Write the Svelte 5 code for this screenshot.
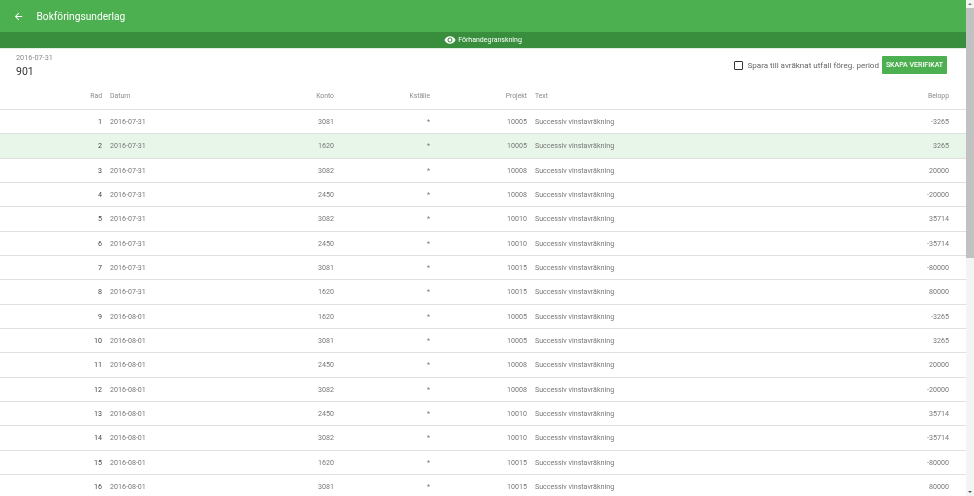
<script>
  const rows = [
    [1, "2016-07-31", 3081, 10005, -3265],
    [2, "2016-07-31", 1620, 10005, 3265],
    [3, "2016-07-31", 3082, 10008, 20000],
    [4, "2016-07-31", 2450, 10008, -20000],
    [5, "2016-07-31", 3082, 10010, 35714],
    [6, "2016-07-31", 2450, 10010, -35714],
    [7, "2016-07-31", 3081, 10015, -80000],
    [8, "2016-07-31", 1620, 10015, 80000],
    [9, "2016-08-01", 1620, 10005, -3265],
    [10, "2016-08-01", 3081, 10005, 3265],
    [11, "2016-08-01", 2450, 10008, 20000],
    [12, "2016-08-01", 3082, 10008, -20000],
    [13, "2016-08-01", 2450, 10010, 35714],
    [14, "2016-08-01", 3082, 10010, -35714],
    [15, "2016-08-01", 1620, 10015, -80000],
    [16, "2016-08-01", 3081, 10015, 80000]
  ];
  const hovered = 2;
</script>

<div class="page">
  <div class="content">
    <header class="appbar">
      <svg class="back" viewBox="0 0 24 24">
        <path fill="currentColor" d="M20 11H7.83l5.59-5.59L12 4l-8 8 8 8 1.41-1.41L7.83 13H20v-2z" />
      </svg>
      <h1>Bokföringsunderlag</h1>
    </header>
    <div class="preview">
      <svg class="eye" viewBox="0 0 24 24">
        <path fill="currentColor" d="M12 4.5C7 4.5 2.73 7.61 1 12c1.73 4.39 6 7.5 11 7.5s9.27-3.11 11-7.5c-1.73-4.39-6-7.5-11-7.5zM12 17c-2.76 0-5-2.24-5-5s2.24-5 5-5 5 2.24 5 5-2.24 5-5 5zm0-8c-1.66 0-3 1.34-3 3s1.34 3 3 3 3-1.34 3-3-1.34-3-3-3z" />
      </svg>
      <span>Förhandegranskning</span>
    </div>
    <div class="summary">
      <div class="title">
        <div class="date">2016-07-31</div>
        <div class="number">901</div>
      </div>
      <div class="actions">
        <label class="check">
          <span class="box"></span>
          <span>Spara till avräknat utfall föreg. period</span>
        </label>
        <button>SKAPA VERIFIKAT</button>
      </div>
    </div>
    <table>
      <colgroup>
        <col class="c-rad" />
        <col class="c-datum" />
        <col class="c-konto" />
        <col class="c-kst" />
        <col class="c-proj" />
        <col />
        <col class="c-belopp" />
      </colgroup>
      <thead>
        <tr>
          <th class="num">Rad</th>
          <th>Datum</th>
          <th class="num">Konto</th>
          <th class="num">Kställe</th>
          <th class="num">Projekt</th>
          <th>Text</th>
          <th class="num last">Belopp</th>
        </tr>
      </thead>
      <tbody>
        {#each rows as r}
          <tr class:hovered={r[0] === hovered}>
            <td class="num rad">{r[0]}</td>
            <td>{r[1]}</td>
            <td class="num">{r[2]}</td>
            <td class="num">*</td>
            <td class="num">{r[3]}</td>
            <td>Successiv vinstavräkning</td>
            <td class="num last">{r[4]}</td>
          </tr>
        {/each}
      </tbody>
    </table>
  </div>
  <div class="scrollbar">
    <span class="arrow up"></span>
    <span class="thumb"></span>
    <span class="arrow down"></span>
  </div>
</div>

<style>
  :global(body) {
    margin: 0;
    overflow: hidden;
    background: #fff;
  }

  .page {
    display: flex;
    height: 496px;
    overflow: hidden;
    font-family: Roboto, "Liberation Sans", sans-serif;
    will-change: transform;
  }

  .content {
    flex: 1;
    min-width: 0;
    overflow: hidden;
  }

  .appbar {
    display: flex;
    align-items: center;
    height: 32px;
    padding-left: 13px;
    background: #4caf50;
    color: #fff;
  }

  .back {
    width: 11px;
    height: 11px;
    margin-right: 12.5px;
  }

  h1 {
    margin: 0;
    font-size: 10.2px;
    font-weight: 400;
  }

  .preview {
    display: flex;
    align-items: center;
    justify-content: center;
    gap: 2px;
    height: 16px;
    background: #388e3c;
    color: #fff;
    font-size: 7px;
  }

  .eye {
    width: 12px;
    height: 12px;
  }

  .summary {
    display: flex;
    justify-content: space-between;
    align-items: flex-start;
    height: 34px;
    padding: 4px 19px 0 16px;
    box-sizing: border-box;
    border-top: 1px solid #e4efe4;
  }

  .date {
    font-size: 7.3px;
    color: #8a8a8a;
    line-height: 10px;
  }

  .number {
    margin-top: 2px;
    font-size: 10.5px;
    line-height: 13px;
    color: #333;
  }

  .actions {
    display: flex;
    align-items: center;
    gap: 3px;
    margin-top: 3px;
  }

  .check {
    display: flex;
    align-items: center;
    gap: 5px;
    font-size: 8.05px;
    color: #666;
  }

  .box {
    width: 7px;
    height: 7px;
    border: 1.3px solid #333;
    border-radius: 1px;
  }

  button {
    width: 65px;
    height: 18px;
    padding: 0;
    border: 0;
    border-radius: 1px;
    background: #4caf50;
    color: #fff;
    font: 500 7px Roboto, sans-serif;
  }

  table {
    width: 100%;
    table-layout: fixed;
    border-collapse: collapse;
    font-size: 7.1px;
    color: #777;
  }

  .c-rad { width: 106px; }
  .c-datum { width: 135.5px; }
  .c-konto { width: 96.5px; }
  .c-kst { width: 96px; }
  .c-proj { width: 97px; }
  .c-belopp { width: 100px; }

  th,
  td {
    padding: 0 4px;
    text-align: left;
    white-space: nowrap;
  }

  th {
    height: 27px;
    font-weight: 400;
    color: #8a8a8a;
    font-size: 6.8px;
  }

  td {
    height: 23.33px;
  }

  tr {
    border-bottom: 1px solid #e0e0e0;
  }

  tbody tr {
    height: 24.33px;
  }

  .hovered {
    background: #e8f5e9;
  }

  .num {
    text-align: right;
  }

  .last {
    padding-right: 17px;
  }

  .rad {
    color: #444;
  }

  .scrollbar {
    position: relative;
    flex: none;
    width: 8px;
    background: #f4f4f4;
  }

  .thumb {
    position: absolute;
    top: 8px;
    left: 0;
    right: 0;
    height: 250px;
    background: #c1c1c1;
  }

  .arrow {
    position: absolute;
    left: 2px;
    border: 2px solid transparent;
  }

  .up {
    top: 1px;
    border-bottom-color: #777;
  }

  .down {
    bottom: 1px;
    border-top-color: #555;
  }
</style>
